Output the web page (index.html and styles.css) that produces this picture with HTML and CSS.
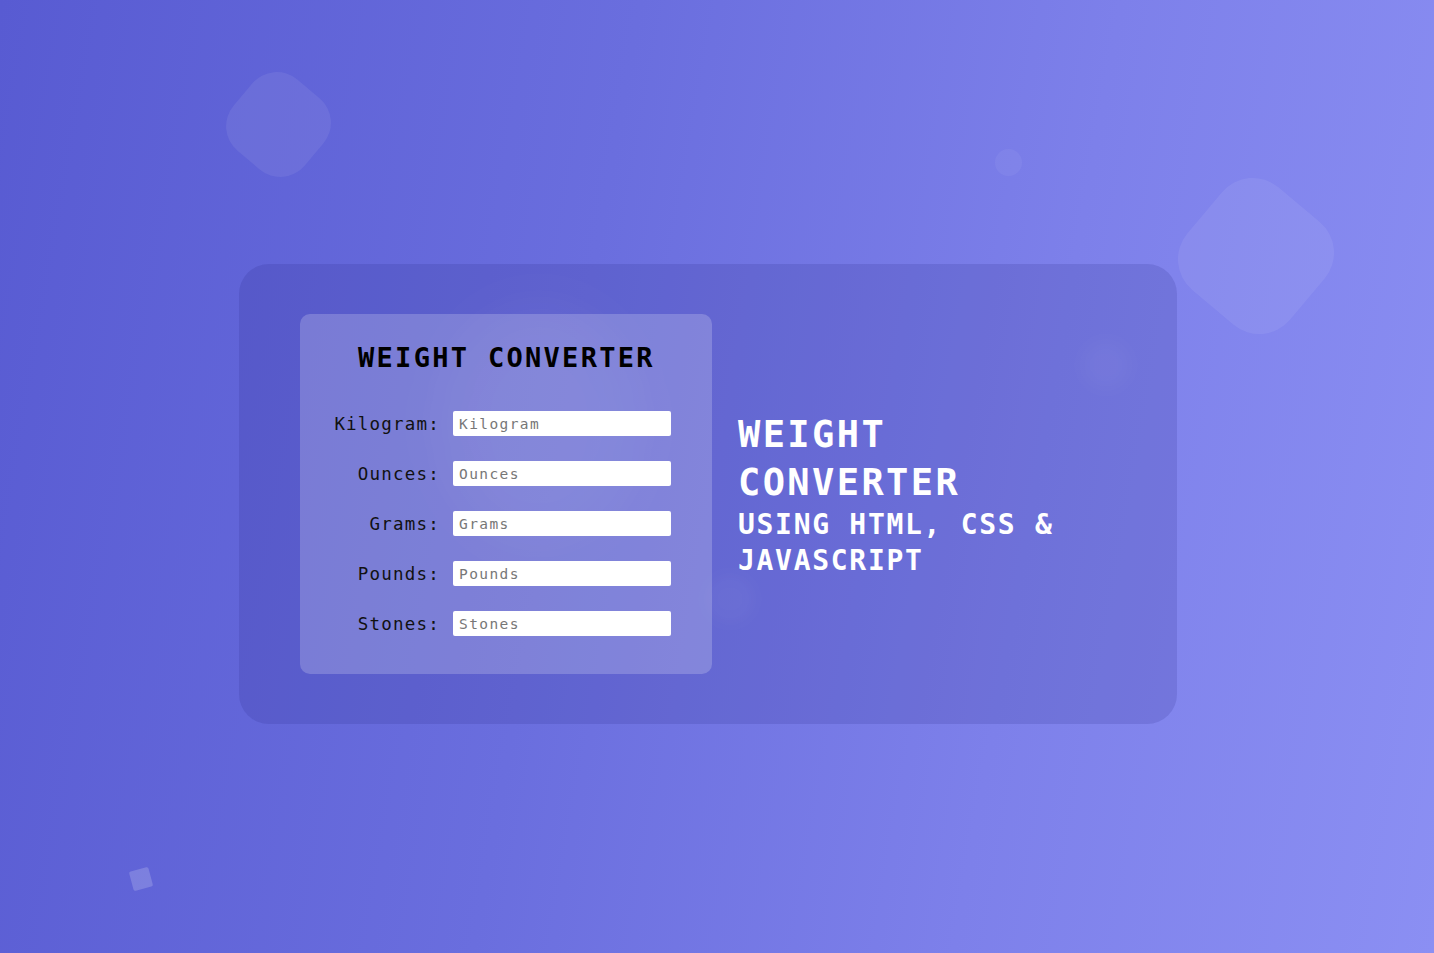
FILE: index.html
```html
<!DOCTYPE html>
<html lang="en">
<head>
<meta charset="utf-8">
<title>Weight Converter</title>
<link rel="stylesheet" href="styles.css">
</head>
<body>
<div class="shape shape-a"></div>
<div class="shape shape-b"></div>
<div class="shape shape-c"></div>
<div class="shape shape-d"></div>
<main class="card">
  <div class="glow glow-1"></div>
  <div class="glow glow-2"></div>
  <div class="glow glow-3"></div>
  <section class="panel">
    <h1 class="panel-title">WEIGHT CONVERTER</h1>
    <form class="fields">
      <label class="field-label" for="kg">Kilogram:</label>
      <input class="field-input" id="kg" type="text" placeholder="Kilogram">
      <label class="field-label" for="oz">Ounces:</label>
      <input class="field-input" id="oz" type="text" placeholder="Ounces">
      <label class="field-label" for="g">Grams:</label>
      <input class="field-input" id="g" type="text" placeholder="Grams">
      <label class="field-label" for="lb">Pounds:</label>
      <input class="field-input" id="lb" type="text" placeholder="Pounds">
      <label class="field-label" for="st">Stones:</label>
      <input class="field-input" id="st" type="text" placeholder="Stones">
    </form>
  </section>
  <section class="intro">
    <h2 class="intro-title">WEIGHT<br>CONVERTER</h2>
    <p class="intro-sub">USING HTML, CSS &amp;<br>JAVASCRIPT</p>
  </section>
</main>
</body>
</html>
```

FILE: styles.css
```css
* { box-sizing: border-box; }
html, body { height: 100%; }
body {
  margin: 0;
  min-height: 953px;
  background: linear-gradient(100deg, #585bd2 0%, #6a6ede 40%, #7d80ea 70%, #8b8ff3 100%);
  font-family: "DejaVu Sans Mono", "Liberation Mono", monospace;
  display: flex;
  align-items: flex-start;
  justify-content: flex-start;
  padding: 264px 0 0 239px;
  position: relative;
  overflow: hidden;
}
.shape {
  position: absolute;
  background: rgba(255, 255, 255, 0.07);
}
.shape-a {
  left: 232px; top: 78px;
  width: 93px; height: 93px;
  border-radius: 32px;
  transform: rotate(40deg);
}
.shape-b {
  left: 1189px; top: 189px;
  width: 134px; height: 134px;
  border-radius: 40px;
  transform: rotate(40deg);
}
.shape-c {
  left: 995px; top: 149px;
  width: 27px; height: 27px;
  border-radius: 50%;
  background: rgba(255, 255, 255, 0.05);
}
.shape-d {
  left: 131px; top: 869px;
  width: 20px; height: 20px;
  border-radius: 2px;
  transform: rotate(-15deg);
  background: rgba(255, 255, 255, 0.18);
}
.card {
  position: relative;
  width: 938px;
  height: 460px;
  flex: none;
  border-radius: 30px;
  background: rgba(40, 40, 130, 0.16);
  padding: 50px 61px;
  display: flex;
  align-items: center;
  gap: 26px;
  overflow: hidden;
}
.glow {
  position: absolute;
  border-radius: 50%;
  background: rgba(255, 255, 255, 0.035);
  filter: blur(8px);
}
.glow-1 { left: 842px; top: 76px; width: 50px; height: 50px; }
.glow-2 { left: 466px; top: 310px; width: 50px; height: 50px; }
.glow-3 { left: 200px; top: 40px; width: 200px; height: 240px; background: rgba(255,255,255,0.05); filter: blur(30px); }
.panel {
  position: relative;
  width: 412px;
  height: 360px;
  flex: none;
  align-self: flex-start;
  border-radius: 10px;
  background: rgba(255, 255, 255, 0.2);
  padding: 25px 41px 0 30px;
}
.panel-title {
  margin: 0 0 0 28px;
  font-size: 27px;
  line-height: 38px;
  letter-spacing: 2.3px;
  font-weight: bold;
  color: #000;
  white-space: nowrap;
}
.fields {
  margin-top: 34px;
  display: grid;
  grid-template-columns: 108px 218px;
  column-gap: 15px;
  row-gap: 25px;
  align-items: center;
}
.field-label {
  text-align: right;
  font-size: 17.5px;
  letter-spacing: 1.2px;
  margin-right: -2px;
  color: #111;
  white-space: nowrap;
}
.field-input {
  width: 218px;
  height: 25px;
  border: none;
  border-radius: 2px;
  background: #fff;
  padding: 0 6px;
  font-family: "DejaVu Sans Mono", "Liberation Mono", monospace;
  font-size: 14.5px;
  letter-spacing: 1.4px;
  color: #222;
  outline: none;
}
.field-input::placeholder { color: #777; }
.intro {
  position: relative;
  color: #fff;
  margin-top: 2px;
}
.intro-title {
  margin: 0;
  font-size: 37px;
  line-height: 48px;
  letter-spacing: 2.4px;
  font-weight: bold;
}
.intro-sub {
  margin: 0;
  font-size: 28px;
  line-height: 36px;
  letter-spacing: 1.7px;
  font-weight: bold;
}
```
